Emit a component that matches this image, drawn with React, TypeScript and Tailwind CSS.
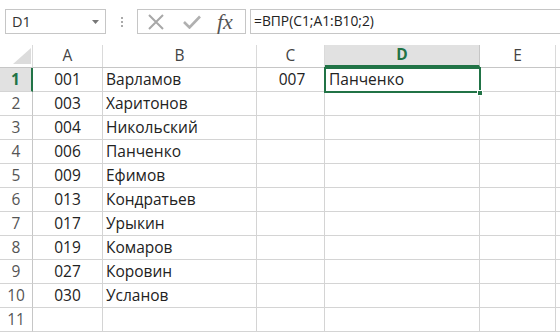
import React from "react";

const cols = [
  { key: "A", w: "w-[70px]" },
  { key: "B", w: "w-[154px]" },
  { key: "C", w: "w-[68px]" },
  { key: "D", w: "w-[155px]" },
  { key: "E", w: "w-[76px]" },
];

const data: [string, string][] = [
  ["001", "Варламов"],
  ["003", "Харитонов"],
  ["004", "Никольский"],
  ["006", "Панченко"],
  ["009", "Ефимов"],
  ["013", "Кондратьев"],
  ["017", "Урыкин"],
  ["019", "Комаров"],
  ["027", "Коровин"],
  ["030", "Усланов"],
  ["", ""],
];

export default function App() {
  return (
    <div
      className="w-[560px] h-[335px] overflow-hidden bg-white text-[#222] relative"
      style={{ fontFamily: '"Open Sans", "Noto Sans", sans-serif' }}
    >
      {/* Formula bar */}
      <div className="h-[45px] flex items-start pt-[9px] pl-[5px]">
        <div className="w-[101px] h-[25px] border border-[#c6c6c6] flex items-center justify-between pl-[6px] pr-[6px] text-[14.5px] text-[#333]">
          <span>D1</span>
          <svg width="7" height="4" viewBox="0 0 7 4">
            <path d="M0 0 L7 0 L3.5 4 Z" fill="#777" />
          </svg>
        </div>
        <div className="w-[31px] h-[25px] flex flex-col items-center justify-center gap-[2px]">
          <span className="w-[2px] h-[2px] bg-[#aaa]" />
          <span className="w-[2px] h-[2px] bg-[#aaa]" />
          <span className="w-[2px] h-[2px] bg-[#aaa]" />
        </div>
        <div className="w-[109px] h-[25px] border border-[#c6c6c6] flex items-center pl-[9px]">
          <svg width="18" height="16" viewBox="0 0 18 16" className="mr-[18px]">
            <path d="M2 1 L16 15 M16 1 L2 15" stroke="#a8a8a8" strokeWidth="2" fill="none" />
          </svg>
          <svg width="18" height="14" viewBox="0 0 18 14" className="mr-[16px]">
            <path d="M1 7 L6.5 12.5 L17 1.5" stroke="#b0b0b0" strokeWidth="2.6" fill="none" />
          </svg>
          <span
            className="text-[22px] italic text-[#555] leading-none"
            style={{ fontFamily: '"Liberation Serif", "DejaVu Serif", serif' }}
          >
            fx
          </span>
        </div>
        <div className="ml-[4px] flex-1 h-[25px] border border-r-0 border-[#c6c6c6] flex items-center pl-[3px] text-[13.8px] text-[#222]">
          =ВПР(C1;A1:B10;2)
        </div>
      </div>

      {/* Grid */}
      <div className="relative">
        {/* Header row */}
        <div className="flex h-[23px] border-b border-[#c6c6c6]">
          <div className="w-[33px] shrink-0 border-r border-[#dadada] relative">
            <svg width="18" height="16" viewBox="0 0 18 16" className="absolute left-[13px] top-[3px]">
              <path d="M18 0 L18 16 L0 16 Z" fill="#dcdcdc" />
            </svg>
          </div>
          {cols.map((c) => (
            <div
              key={c.key}
              className={`${c.w} shrink-0 flex items-center justify-center text-[15.5px] ${
                c.key === "D"
                  ? "bg-[#e1e1e1] text-[#217346] font-bold border-b-2 border-[#217346] border-r border-r-[#c6c6c6]"
                  : "text-[#444] border-r border-[#dadada]"
              }`}
            >
              {c.key}
            </div>
          ))}
          <div className="flex-1" />
        </div>

        {data.map((row, i) => (
          <div key={i} className="flex h-[24px]">
            <div
              className={`w-[33px] shrink-0 flex items-center justify-center text-[15.5px] border-b border-[#d4d4d4] ${
                i === 0
                  ? "bg-[#e1e1e1] text-[#217346] font-bold border-r-2 border-r-[#217346]"
                  : "text-[#555] border-r border-r-[#c6c6c6]"
              }`}
            >
              {i + 1}
            </div>
            <div className="w-[70px] shrink-0 flex items-center justify-center text-[15.5px] border-r border-b border-[#d4d4d4]">
              {row[0]}
            </div>
            <div className="w-[154px] shrink-0 flex items-center pl-[3px] text-[15.5px] border-r border-b border-[#d4d4d4]">
              {row[1]}
            </div>
            <div className="w-[68px] shrink-0 flex items-center justify-center pl-[3px] text-[15.5px] border-r border-b border-[#d4d4d4]">
              {i === 0 ? "007" : ""}
            </div>
            <div className="w-[155px] shrink-0 flex items-center pl-[4px] text-[15.5px] border-r border-b border-[#d4d4d4]">
              {i === 0 ? "Панченко" : ""}
            </div>
            <div className="w-[76px] shrink-0 border-r border-b border-[#d4d4d4]" />
            <div className="flex-1 border-b border-[#d4d4d4]" />
          </div>
        ))}

        {/* Selection overlay */}
        <div className="absolute left-[324px] top-[22px] w-[157px] h-[26px] border-2 border-[#217346] pointer-events-none" />
        <div className="absolute left-[477px] top-[45px] w-[6px] h-[6px] bg-[#217346] border border-white" />
      </div>
    </div>
  );
}
